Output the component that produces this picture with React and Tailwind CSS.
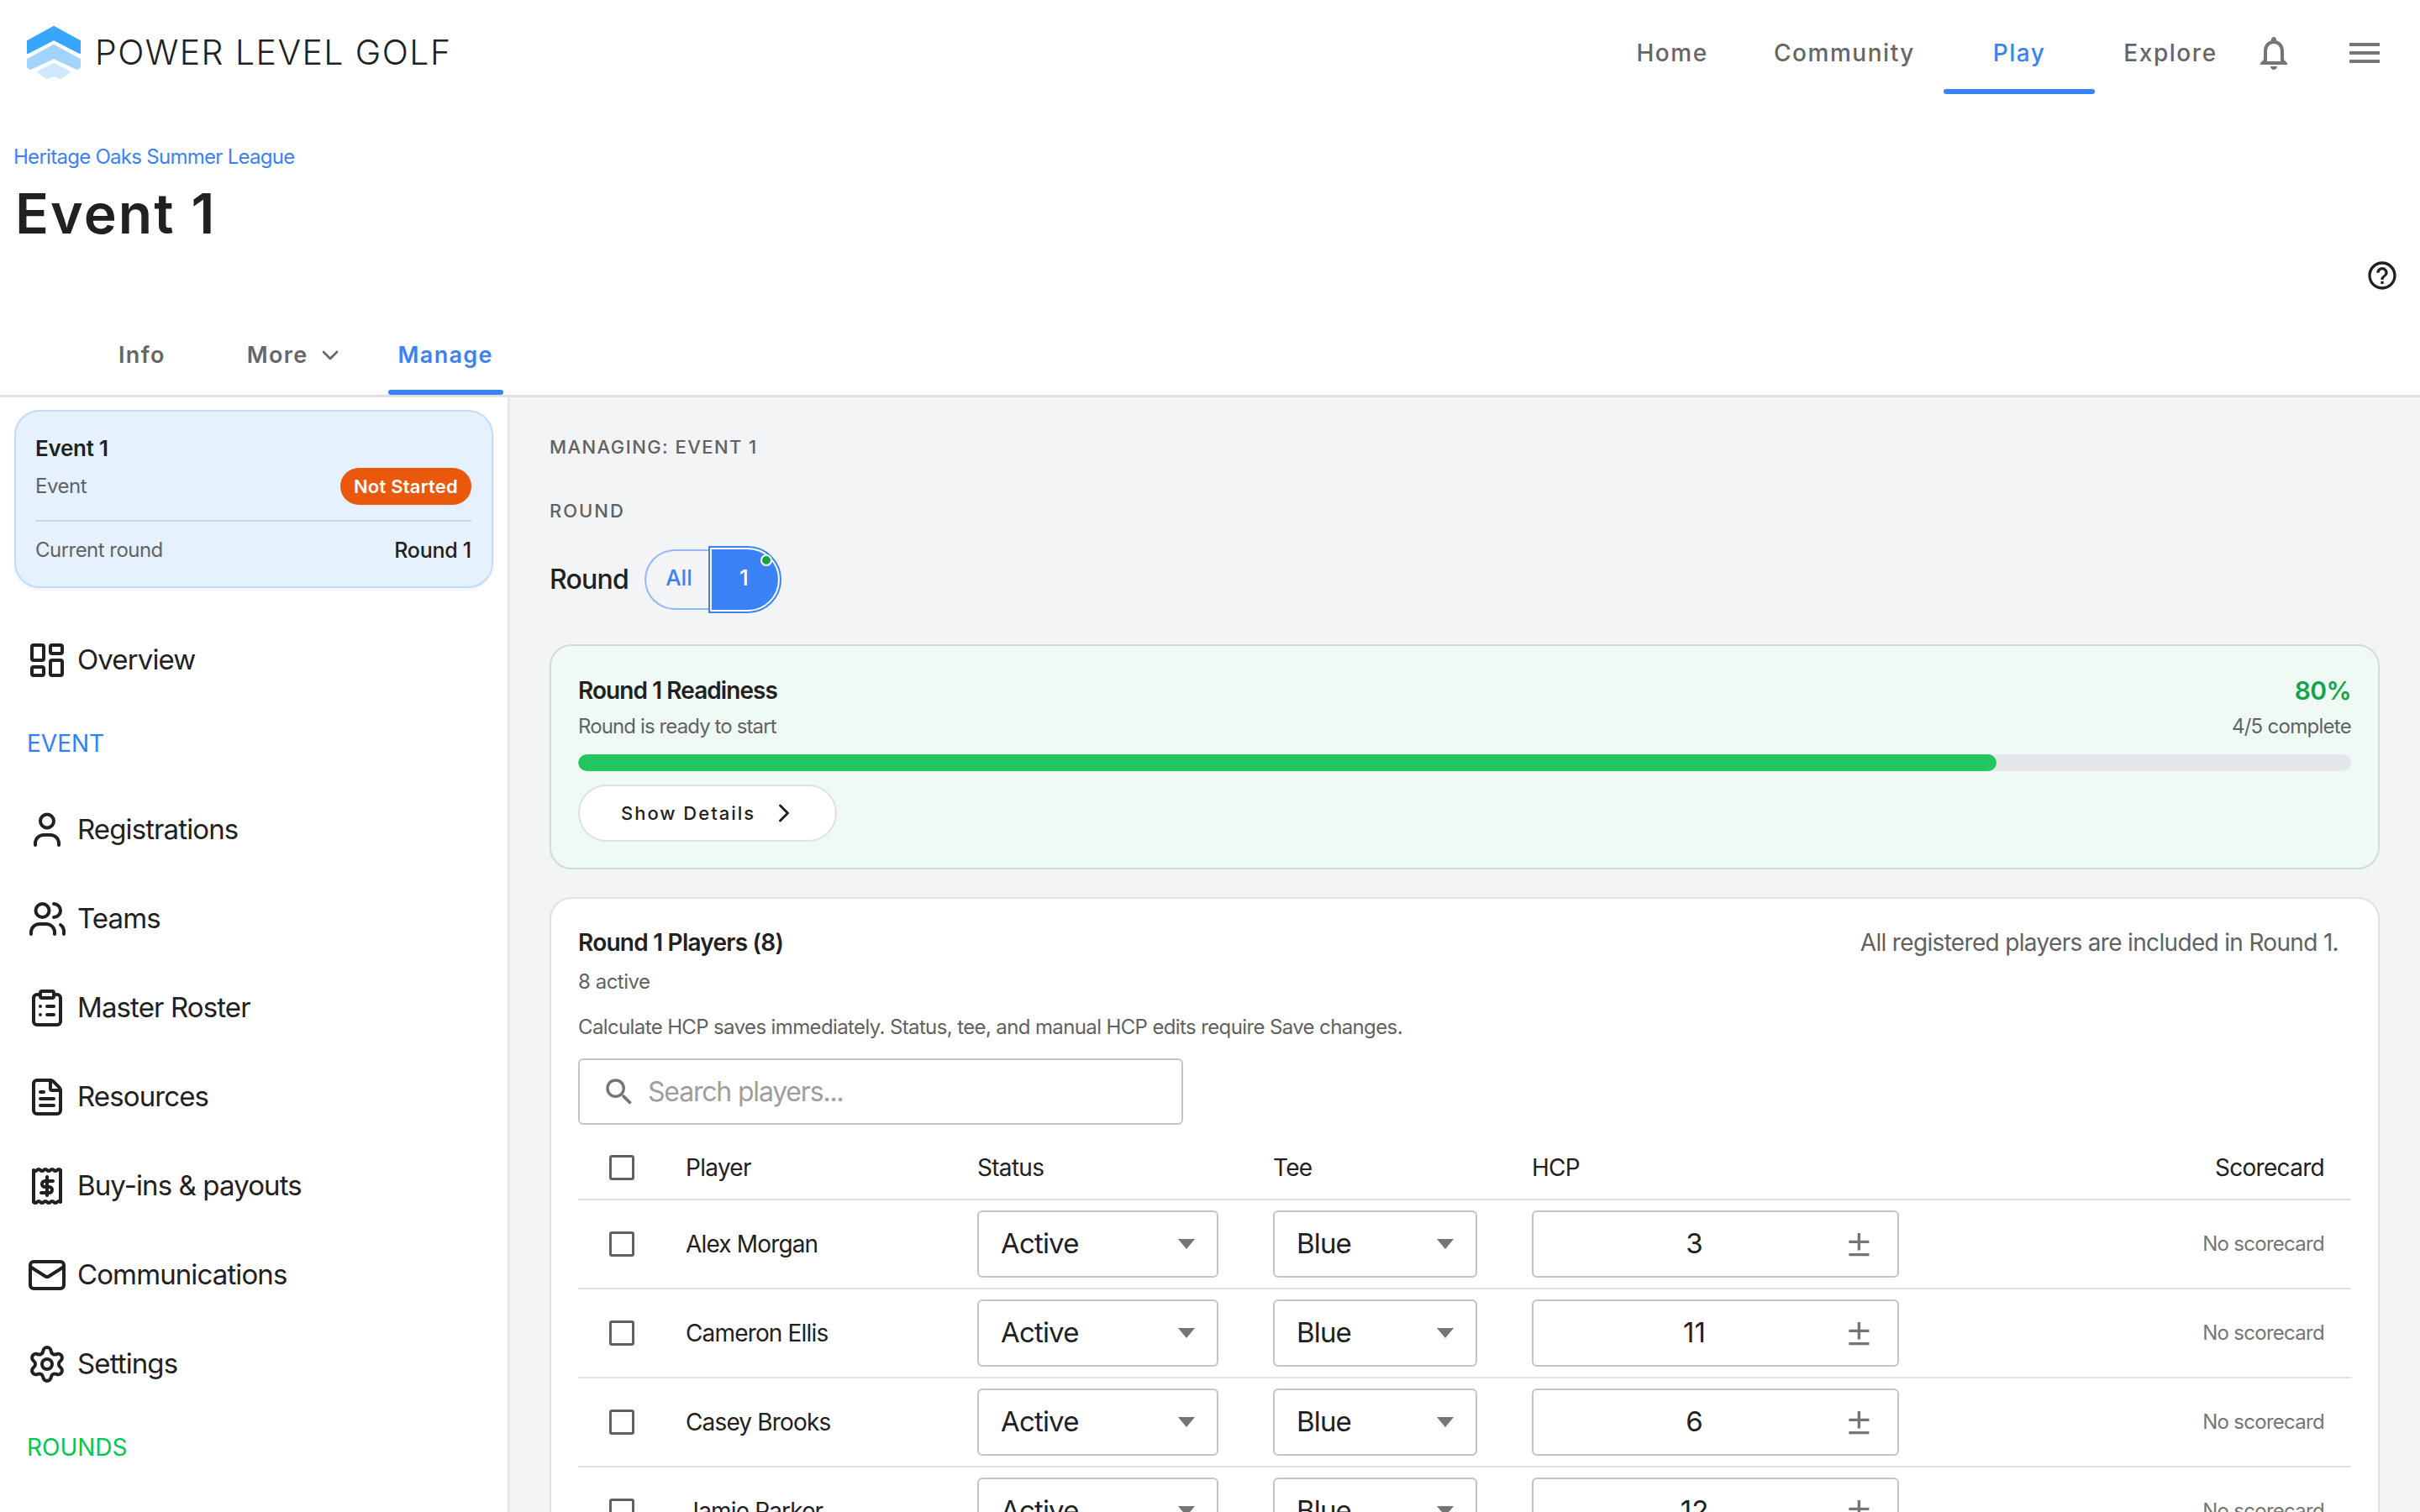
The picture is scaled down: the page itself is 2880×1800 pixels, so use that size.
import React from 'react';
import { ChevronDown, ChevronRight, LayoutDashboard, ClipboardList, FileText, Mail, Settings } from 'lucide-react';
import { MdNotificationsNone, MdMenu, MdHelpOutline, MdSearch } from 'react-icons/md';

const Logo = () => (
    <svg width="64" height="64" viewBox="0 0 64 64">
        <path d="M32 1 L63 18 V32 L32 16 L1 32 V18 Z" fill="#38a6ff" stroke="#38a6ff" strokeWidth="2" strokeLinejoin="round" />
        <path d="M32 23 L63 40 V49 L60 51 L32 38 L4 51 L1 49 V40 Z" fill="#a0d4ff" stroke="#a0d4ff" strokeWidth="2" strokeLinejoin="round" />
        <path d="M32 45 L51 55 L40 62 L32 59 L24 62 L13 55 Z" fill="#cfe8ff" stroke="#cfe8ff" strokeWidth="2" strokeLinejoin="round" />
    </svg>
);

const stroke = { fill: 'none', stroke: 'currentColor', strokeWidth: 2, strokeLinecap: 'round', strokeLinejoin: 'round' };

const UserIcon = () => (
    <svg width="48" height="48" viewBox="0 0 24 24" {...stroke}>
        <circle cx="12" cy="6.75" r="4" />
        <path d="M5 21v-1a5 5 0 0 1 5-5h4a5 5 0 0 1 5 5v1" />
    </svg>
);

const TeamIcon = () => (
    <svg width="48" height="48" viewBox="0 0 24 24" {...stroke}>
        <circle cx="9.25" cy="7" r="4" />
        <path d="M16 3a4 4 0 0 1 0 8" />
        <path d="M2.5 21v-1a5 5 0 0 1 5-5h4a5 5 0 0 1 5 5v1" />
        <path d="M20 15.5a5 5 0 0 1 2 4.5v1" />
    </svg>
);

const ReceiptIcon = () => (
    <svg width="48" height="48" viewBox="0 0 24 24" {...stroke}>
        <path d="M4 2.5q1 1 2 0t2 0t2 0t2 0t2 0t2 0t2 0t2 0V21.5q-1 -1 -2 0t-2 0t-2 0t-2 0t-2 0t-2 0t-2 0t-2 0Z" />
        <path d="M12 6.5v11" />
        <path d="M15.5 9H10.75a1.75 1.75 0 0 0 0 3.5h2.5a1.75 1.75 0 0 1 0 3.5H8.5" />
    </svg>
);

const NavRow = ({ icon, label }) => (
    <div className="flex h-[106px] items-center gap-[12px] pl-[15px] text-[33px] tracking-[-0.027em] text-[#212121]">
        <span className="flex h-[48px] w-[48px] items-center justify-center">{icon}</span>
        <span>{label}</span>
    </div>
);

const Caret = () => <span className="h-0 w-0 border-x-[10px] border-t-[12px] border-x-transparent border-t-[#757575]" />;

const SelectBox = ({ value, className }) => (
    <div className={`flex h-[80px] items-center justify-between rounded-[6px] border-2 border-[#c4c4c4] bg-white pl-[26px] pr-[26px] text-[33px] tracking-[-0.025em] text-[#212121] ${className}`}>
        <span>{value}</span>
        <Caret />
    </div>
);

const CheckBox = () => <span className="block h-[30px] w-[30px] rounded-[3px] border-[3px] border-[#616161] bg-white" />;

const players = [
    { name: 'Alex Morgan', hcp: 3 },
    { name: 'Cameron Ellis', hcp: 11 },
    { name: 'Casey Brooks', hcp: 6 },
    { name: 'Jamie Parker', hcp: 12 },
];

const App = () => {
    return (
        <div className="flex h-[1800px] w-full flex-col overflow-hidden bg-white font-['Inter',sans-serif] text-[#212121]">
            <header className="flex h-[112px] shrink-0 items-center justify-between pl-[32px] pr-[42px] pt-[14px]">
                <div className="flex items-center gap-[17px]">
                    <Logo />
                    <span className="text-[41px] font-light tracking-[0.035em] text-[#212121]">POWER LEVEL GOLF</span>
                </div>
                <div className="flex h-full items-center">
                    <nav className="flex h-full text-[28px] font-medium tracking-[0.055em] text-[#666666]">
                        <a className="flex min-w-[174px] items-center justify-center px-[34px]">Home</a>
                        <a className="flex min-w-[180px] items-center justify-center px-[34px]">Community</a>
                        <a className="relative flex min-w-[180px] items-center justify-center px-[34px] text-[#3b82f6]">
                            Play
                            <span className="absolute inset-x-0 bottom-0 h-[6px] rounded-full bg-[#3b82f6]" />
                        </a>
                        <a className="flex min-w-[180px] items-center justify-center px-[34px]">Explore</a>
                    </nav>
                    <div className="ml-[9px] flex items-center gap-[60px] text-[#757575]">
                        <MdNotificationsNone size={48} />
                        <MdMenu size={48} />
                    </div>
                </div>
            </header>

            <section className="flex h-[358px] shrink-0 flex-col">
                <div className="pl-[16px] pt-[60px] text-[24px] leading-[30px] tracking-[-0.03em] text-[#3b82f6]">Heritage Oaks Summer League</div>
                <h1 className="pl-[18px] pt-[14px] text-[66px] font-semibold leading-[76px] tracking-[0.032em] text-[#212121]">Event 1</h1>
                <div className="flex justify-end pr-[25px] pt-[16px] text-[#212121]">
                    <MdHelpOutline size={40} />
                </div>
                <div className="mt-auto flex h-[84px] items-stretch pl-[129px] text-[27px] font-semibold tracking-[0.05em] text-[#666666]">
                    <a className="flex items-center px-[12px] pb-[10px]">Info</a>
                    <a className="ml-[73px] flex items-center gap-[10px] px-[12px] pb-[10px]">
                        More
                        <ChevronDown size={32} strokeWidth={2} />
                    </a>
                    <a className="relative ml-[41px] flex items-center px-[12px] pb-[10px] text-[#3b82f6]">
                        Manage
                        <span className="absolute inset-x-0 bottom-0 h-[6px] rounded-full bg-[#3b82f6]" />
                    </a>
                </div>
            </section>

            <div className="flex min-h-0 flex-1 border-t-[3px] border-[#e0e0e0]">
                <aside className="w-[607px] shrink-0 border-r-[3px] border-[#e5e7eb] bg-white pl-[17px] pr-[17px] pt-[15px]">
                    <div className="flex h-[212px] flex-col rounded-[30px] border-2 border-[#bfdbfe] bg-[#e6f1fe] pl-[23px] pr-[24px] shadow-[0_2px_4px_rgba(0,0,0,0.06)]">
                        <div className="pt-[26px] text-[26px] font-semibold leading-[36px] tracking-[-0.01em]">Event 1</div>
                        <div className="mt-[5px] flex h-[44px] items-center justify-between">
                            <span className="text-[24px] tracking-[-0.02em] text-[#5f6368]">Event</span>
                            <span className="flex h-[44px] items-center rounded-full bg-[#ea580c] px-[16px] text-[22px] font-semibold tracking-[0.01em] text-white">Not Started</span>
                        </div>
                        <div className="mt-[18px] h-[2px] bg-[#cbd5e1]" />
                        <div className="mt-[18px] flex items-center justify-between leading-[32px]">
                            <span className="text-[24px] tracking-[-0.022em] text-[#5f6368]">Current round</span>
                            <span className="text-[25px] font-medium tracking-[-0.01em]">Round 1</span>
                        </div>
                    </div>
                    <div className="mt-[33px]">
                        <NavRow icon={<LayoutDashboard size={48} strokeWidth={2} />} label="Overview" />
                        <div className="flex h-[96px] items-center pb-[4px] pl-[15px] text-[28px] text-[#2f80ff]">EVENT</div>
                        <NavRow icon={<UserIcon />} label="Registrations" />
                        <NavRow icon={<TeamIcon />} label="Teams" />
                        <NavRow icon={<ClipboardList size={48} strokeWidth={2} />} label="Master Roster" />
                        <NavRow icon={<FileText size={48} strokeWidth={2} />} label="Resources" />
                        <NavRow icon={<ReceiptIcon />} label="Buy-ins & payouts" />
                        <NavRow icon={<Mail size={48} strokeWidth={2} />} label="Communications" />
                        <NavRow icon={<Settings size={48} strokeWidth={2} />} label="Settings" />
                        <div className="flex h-[92px] items-center pl-[15px] text-[28px] text-[#00c853]">ROUNDS</div>
                    </div>
                </aside>

                <main className="min-w-0 flex-1 bg-[#f3f4f6] pl-[47px] pr-[48px] pt-[44px]">
                    <div className="text-[22px] font-medium leading-[30px] tracking-[0.065em] text-[#616161]">MANAGING: EVENT 1</div>
                    <div className="mt-[46px] text-[22px] font-medium leading-[30px] tracking-[0.09em] text-[#616161]">ROUND</div>
                    <div className="mt-[27px] flex h-[80px] items-center">
                        <span className="text-[32px] font-medium tracking-[-0.025em]">Round</span>
                        <div className="ml-[19px] flex items-center">
                            <span className="flex h-[72px] w-[76px] items-center justify-center rounded-l-full border-2 border-r-0 border-[#93b8f8] pb-[5px] pl-[4px] text-[26px] font-medium text-[#3b82f6]">All</span>
                            <span className="relative flex h-[80px] w-[87px] items-center justify-center rounded-r-full border-2 border-[#3b82f6] bg-[#3b82f6] pb-[5px] pr-[2px] text-[26px] font-medium text-white outline-2 -outline-offset-4 outline-white">
                                1
                                <span className="absolute right-[9px] top-[8px] h-[14px] w-[14px] rounded-full border-2 border-white bg-[#16a34a]" />
                            </span>
                        </div>
                    </div>

                    <div className="mt-[37px] rounded-[26px] border-2 border-[#d1dcd6] bg-[#effaf4] px-[32px] pb-[31px] pt-[35px]">
                        <div className="flex items-start justify-between">
                            <div>
                                <div className="text-[28px] font-semibold leading-[36px] tracking-[-0.033em]">Round 1 Readiness</div>
                                <div className="mt-[9px] text-[24px] leading-[32px] tracking-[-0.037em] text-[#5f6368]">Round is ready to start</div>
                            </div>
                            <div className="text-right">
                                <div className="text-[30px] font-semibold leading-[36px] tracking-[-0.02em] text-[#16a34a]">80%</div>
                                <div className="mt-[9px] text-[24px] leading-[32px] tracking-[-0.03em] text-[#5f6368]">4/5 complete</div>
                            </div>
                        </div>
                        <div className="mt-[17px] h-[20px] overflow-hidden rounded-full bg-[#e5e7eb]">
                            <div className="h-full w-[80%] rounded-full bg-[#22c55e]" />
                        </div>
                        <button className="mt-[16px] flex h-[68px] w-[308px] items-center rounded-full border-2 border-[#e0e0e0] bg-white pl-[49px] text-[22px] font-medium tracking-[0.09em]">
                            Show Details
                            <ChevronRight size={36} strokeWidth={2} className="ml-[16px]" />
                        </button>
                    </div>

                    <div className="mt-[33px] rounded-t-[26px] border-2 border-b-0 border-[#e0e0e0] bg-white px-[32px] pt-[31px]">
                        <div className="flex items-center justify-between">
                            <span className="text-[28px] font-semibold leading-[36px] tracking-[-0.027em]">Round 1 Players (8)</span>
                            <span className="pr-[15px] text-[28px] tracking-[-0.024em] text-[#616161]">All registered players are included in Round 1.</span>
                        </div>
                        <div className="mt-[10px] text-[24px] leading-[32px] tracking-[-0.02em] text-[#616161]">8 active</div>
                        <div className="mt-[22px] text-[24px] leading-[32px] tracking-[-0.026em] text-[#616161]">Calculate HCP saves immediately. Status, tee, and manual HCP edits require Save changes.</div>
                        <div className="mt-[21px] flex h-[79px] w-[720px] items-center rounded-[6px] border-2 border-[#c4c4c4] bg-white pl-[26px]">
                            <MdSearch size={42} className="text-[#757575]" />
                            <span className="ml-[13px] text-[32px] tracking-[-0.037em] text-[#9e9e9e]">Search players...</span>
                        </div>

                        <div className="mt-[14px] grid h-[76px] grid-cols-[128px_347px_352px_308px_1fr] items-center border-b-2 border-[#e0e0e0] text-[28px] tracking-[-0.025em] text-[#212121]">
                            <span className="pl-[37px]"><CheckBox /></span>
                            <span>Player</span>
                            <span>Status</span>
                            <span>Tee</span>
                            <div className="flex items-center justify-between pr-[32px]">
                                <span>HCP</span>
                                <span>Scorecard</span>
                            </div>
                        </div>
                        {players.map((player) => (
                            <div key={player.name} className="grid h-[106px] grid-cols-[128px_347px_352px_308px_1fr] items-center border-b-2 border-[#e0e0e0]">
                                <span className="pl-[37px]"><CheckBox /></span>
                                <span className="text-[28px] tracking-[-0.03em] text-[#212121]">{player.name}</span>
                                <SelectBox value="Active" className="w-[287px]" />
                                <SelectBox value="Blue" className="w-[243px]" />
                                <div className="flex items-center justify-between pr-[32px]">
                                    <div className="relative flex h-[80px] w-[437px] items-center justify-center rounded-[6px] border-2 border-[#c4c4c4] pr-[50px] text-[33px]">
                                        {player.hcp}
                                        <span className="absolute right-[28px] pb-[4px] text-[54px] font-light leading-none text-[#757575]">±</span>
                                    </div>
                                    <span className="text-[24px] tracking-[-0.03em] text-[#757575]">No scorecard</span>
                                </div>
                            </div>
                        ))}
                    </div>
                </main>
            </div>
        </div>
    );
};

export default App;
